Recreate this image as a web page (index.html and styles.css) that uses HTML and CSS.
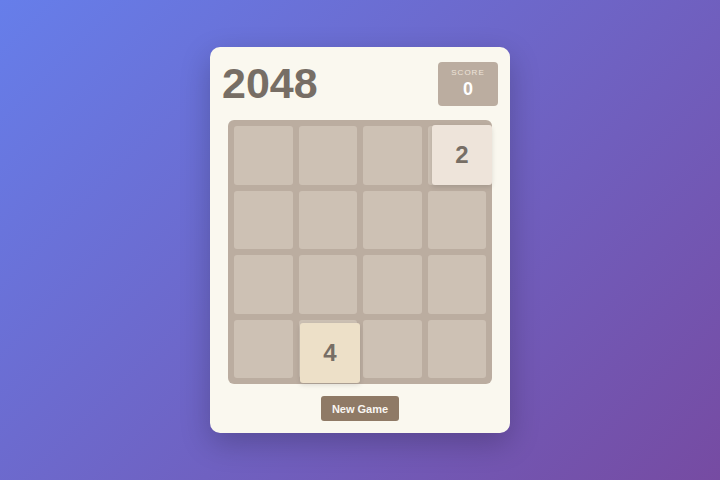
FILE: index.html
```html
<!DOCTYPE html>
<html>
<head>
<meta charset="utf-8">
<link rel="stylesheet" href="styles.css">
</head>
<body>
<div class="card">
  <div class="header">
    <h1 class="title">2048</h1>
    <div class="score">
      <div class="score-label">SCORE</div>
      <div class="score-value">0</div>
    </div>
  </div>
  <div class="board">
    <div class="grid">
      <div class="cell"></div><div class="cell"></div><div class="cell"></div><div class="cell"></div>
      <div class="cell"></div><div class="cell"></div><div class="cell"></div><div class="cell"></div>
      <div class="cell"></div><div class="cell"></div><div class="cell"></div><div class="cell"></div>
      <div class="cell"></div><div class="cell"></div><div class="cell"></div><div class="cell"></div>
    </div>
    <div class="tile tile-2 pos-a">2</div>
    <div class="tile tile-4 pos-b">4</div>
  </div>
  <div class="actions">
    <button class="btn">New Game</button>
  </div>
</div>
</body>
</html>
```

FILE: styles.css
```css
* { box-sizing: border-box; }
html, body { margin: 0; height: 100%; }
body {
  width: 720px;
  height: 480px;
  background: linear-gradient(135deg, #667eea 0%, #764ba2 100%);
  font-family: "Liberation Sans", Arial, sans-serif;
  display: flex;
  justify-content: center;
  padding-top: 47px;
}
.card {
  width: 300px;
  height: 386px;
  background: #faf8ef;
  border-radius: 10px;
  padding: 12px;
  box-shadow: 0 10px 30px rgba(0,0,0,0.22);
  display: flex;
  flex-direction: column;
  align-items: center;
}
.header {
  width: 100%;
  display: flex;
  justify-content: space-between;
  align-items: center;
  margin-bottom: 12px;
}
.title {
  margin: 0;
  font-size: 43px;
  font-weight: bold;
  color: #776e65;
  line-height: 49px;
}
.score {
  width: 60px;
  height: 44px;
  background: #bbada0;
  border-radius: 4px;
  display: flex;
  flex-direction: column;
  align-items: center;
  padding-top: 6px;
}
.score-label {
  font-size: 8px;
  letter-spacing: 1px;
  color: #eee4da;
  line-height: 10px;
}
.score-value {
  font-size: 18px;
  font-weight: bold;
  color: #ffffff;
  line-height: 22px;
}
.board {
  position: relative;
  width: 264px;
  height: 264px;
  background: #bbada0;
  border-radius: 6px;
  padding: 6px;
}
.grid {
  display: grid;
  grid-template-columns: repeat(4, 1fr);
  grid-template-rows: repeat(4, 1fr);
  gap: 6px;
  width: 100%;
  height: 100%;
}
.cell {
  background: #cdc1b4;
  border-radius: 3px;
}
.tile {
  position: absolute;
  width: 60px;
  height: 60px;
  border-radius: 3px;
  display: flex;
  align-items: center;
  justify-content: center;
  font-size: 24px;
  font-weight: bold;
  color: #776e65;
  box-shadow: 0 2px 5px rgba(0,0,0,0.12);
}
.tile-2 { background: #eee4da; }
.tile-4 { background: #ede0c8; }
.pos-a { left: 204px; top: 5px; }
.pos-b { left: 72px; top: 203px; }
.actions {
  margin-top: 12px;
  display: flex;
  justify-content: center;
}
.btn {
  width: 78px;
  height: 25px;
  border: none;
  border-radius: 3px;
  background: #8f7a66;
  color: #f9f6f2;
  font-family: "Liberation Sans", Arial, sans-serif;
  font-size: 11px;
  font-weight: bold;
  padding: 0;
}
```
